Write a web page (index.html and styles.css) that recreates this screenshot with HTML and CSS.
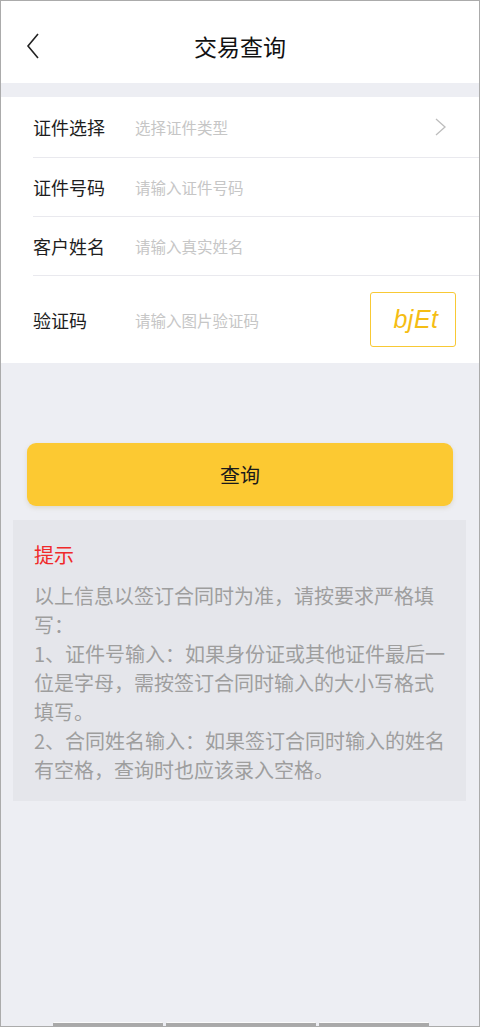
FILE: index.html
```html
<!DOCTYPE html>
<html lang="zh">
<head>
<meta charset="utf-8">
<link rel="stylesheet" href="styles.css">
</head>
<body>
<div class="screen">
  <header class="header">
    <svg class="back" width="14" height="26" viewBox="0 0 14 26"><path d="M12 1 L2 13 L12 25" fill="none" stroke="#222" stroke-width="1.6"/></svg>
    <h1 class="title">交易查询</h1>
  </header>
  <div class="form">
    <div class="row row-first">
      <span class="label">证件选择</span>
      <span class="ph">选择证件类型</span>
      <svg class="arrow" width="11" height="18" viewBox="0 0 11 18"><path d="M1 1 L10 9 L1 17" fill="none" stroke="#bdbdbd" stroke-width="1.3"/></svg>
    </div>
    <div class="row">
      <span class="label">证件号码</span>
      <span class="ph">请输入证件号码</span>
    </div>
    <div class="row">
      <span class="label">客户姓名</span>
      <span class="ph">请输入真实姓名</span>
    </div>
    <div class="row row-last">
      <span class="label">验证码</span>
      <span class="ph">请输入图片验证码</span>
      <div class="captcha">bjEt</div>
    </div>
  </div>
  <div class="btn-wrap"><button class="btn">查询</button></div>
  <div class="tips">
    <div class="tips-title">提示</div>
    <p class="tips-text">以上信息以签订合同时为准，请按要求严格填写：<br>1、证件号输入：如果身份证或其他证件最后一位是字母，需按签订合同时输入的大小写格式填写。<br>2、合同姓名输入：如果签订合同时输入的姓名有空格，查询时也应该录入空格。</p>
  </div>
  <div class="bottom-bar">
    <span class="seg seg1"></span><span class="seg seg2"></span><span class="seg seg3"></span>
  </div>
</div>
</body>
</html>
```
FILE: styles.css
```css
* { box-sizing: border-box; }
html, body { margin: 0; padding: 0; }
body {
  font-family: "Noto Sans CJK SC", "Noto Sans", sans-serif;
  background: #edeef3;
}
.screen {
  position: relative;
  width: 480px;
  height: 1027px;
  border: 1px solid #ababab;
  background: #edeef3;
  overflow: hidden;
}
.header {
  height: 82px;
  background: #fff;
  display: flex;
  align-items: center;
  justify-content: center;
  position: relative;
  padding-top: 9px;
}
.back {
  position: absolute;
  left: 25px;
  top: 32px;
}
.title {
  margin: 0;
  font-size: 23px;
  font-weight: 400;
  color: #111;
  line-height: 1;
}
.form {
  margin-top: 14px;
  background: #fff;
  padding-left: 32px;
}
.row {
  display: flex;
  align-items: center;
  height: 59px;
  border-bottom: 1px solid #e9e9ee;
  position: relative;
}
.row-first { height: 61px; }
.row-last { height: 87px; border-bottom: none; }
.label {
  width: 102px;
  font-size: 18px;
  color: #1e1e1e;
  flex: none;
}
.ph {
  font-size: 15.5px;
  color: #c6c6c6;
  flex: 1;
}
.arrow {
  margin-right: 33px;
}
.captcha {
  width: 86px;
  height: 55px;
  border: 1.5px solid #f8c935;
  border-radius: 3px;
  margin-right: 23px;
  color: #f5bd14;
  font-family: "Liberation Sans", sans-serif;
  font-style: italic;
  font-size: 25px;
  display: flex;
  align-items: center;
  justify-content: center;
  padding-left: 6px;
  letter-spacing: 0.5px;
}
.btn-wrap {
  padding: 80px 26px 0 26px;
}
.btn {
  width: 100%;
  height: 63px;
  border: none;
  border-radius: 9px;
  background: #fcc932;
  box-shadow: 0 2px 4px rgba(180, 160, 100, 0.25);
  font-family: "Noto Sans CJK SC", sans-serif;
  font-size: 20px;
  color: #1a1a1a;
  padding: 0;
}
.tips {
  margin: 14px 13px 0 12px;
  background: #e5e6eb;
  padding: 21px 15px 17px 21px;
}
.tips-title {
  color: #f02a2a;
  font-size: 20px;
  line-height: 28px;
}
.tips-text {
  margin: 12px 0 0 0;
  color: #9e9e9e;
  font-size: 20px;
  line-height: 29px;
}
.bottom-bar {
  position: absolute;
  left: 52px;
  bottom: 0;
  display: flex;
  gap: 3px;
}
.seg {
  height: 4px;
  background: #a9a9a9;
  border-top: 1px solid #fafafa;
  border-radius: 1px 1px 0 0;
}
.seg1 { width: 110px; }
.seg2 { width: 150px; }
.seg3 { width: 110px; }
```
